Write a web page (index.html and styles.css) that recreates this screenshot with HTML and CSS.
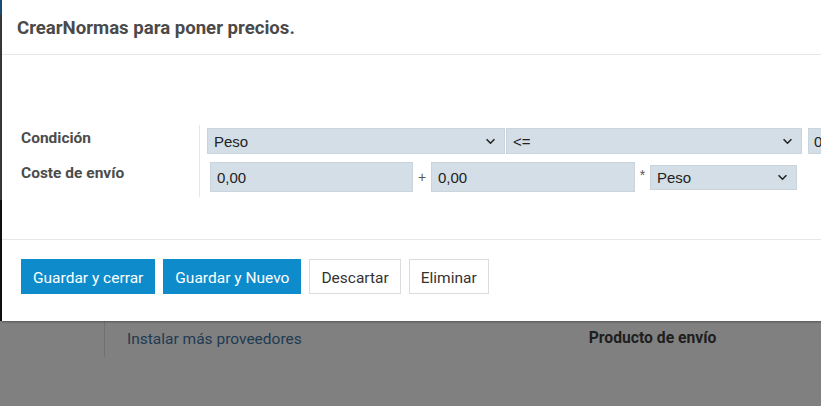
FILE: index.html
```html
<!DOCTYPE html>
<html lang="es">
<head>
    <meta charset="UTF-8">
    <title>CrearNormas para poner precios.</title>
    <link rel="stylesheet" href="styles.css">
</head>
<body>
    <div class="page">
        <div class="page-row">
            <div class="page-side"></div>
            <a class="page-link">Instalar más proveedores</a>
            <div class="page-label">Producto de envío</div>
        </div>
    </div>

    <div class="edge"></div>

    <div class="modal">
        <div class="modal-header">
            <h4>CrearNormas para poner precios.</h4>
        </div>

        <div class="modal-body">
            <div class="form-grid">
                <div class="form-label first">Condición</div>
                <div class="form-field cond">
                    <div class="select sel-var">Peso <svg viewBox="0 0 12 8"><path d="M1.5 1.5 L6 6 L10.5 1.5"/></svg></div>
                    <div class="select sel-op">&lt;= <svg viewBox="0 0 12 8"><path d="M1.5 1.5 L6 6 L10.5 1.5"/></svg></div>
                    <div class="input in-max">0</div>
                </div>

                <div class="form-label">Coste de envío</div>
                <div class="form-field cost">
                    <div class="input in-base">0,00</div>
                    <span class="op">+</span>
                    <div class="input in-factor">0,00</div>
                    <span class="op star">*</span>
                    <div class="select sel-var2">Peso <svg viewBox="0 0 12 8"><path d="M1.5 1.5 L6 6 L10.5 1.5"/></svg></div>
                </div>
            </div>
        </div>

        <div class="modal-footer">
            <button class="btn primary">Guardar y cerrar</button>
            <button class="btn primary">Guardar y Nuevo</button>
            <button class="btn">Descartar</button>
            <button class="btn">Eliminar</button>
        </div>
    </div>
</body>
</html>
```

FILE: styles.css
```css
body { margin: 0; background: #808080; font-family: Roboto, "Liberation Sans", sans-serif; overflow: hidden; width: 821px; height: 406px; position: relative; }

/* dimmed page behind the dialog */
.page { padding-top: 321px; }
.page-row { display: flex; height: 36px; }
.page-side { width: 104px; border-right: 1px solid #707070; }
.page-link { margin-left: 22px; margin-top: 9px; font-size: 15.5px; color: #1f3a50; }
.page-label { margin-left: 287px; margin-top: 7px; font-size: 15.7px; font-weight: bold; color: #1e1e1e; }

.edge { position: absolute; left: 0; top: 0; width: 2px; height: 321px; background: linear-gradient(#1a4f78 0 15px, #3a3a3a 15px 200px, #111 200px); }

/* dialog */
.modal { position: absolute; left: 2px; top: 0; width: 900px; height: 321px; background: #fff; box-shadow: 0 1px 2px rgba(0,0,0,0.35); color: #4c4c4c; }
.modal-header { height: 55px; border-bottom: 1px solid #e6e6e6; padding-left: 15px; display: flex; align-items: center; padding-top: 2px; box-sizing: border-box; }
.modal-header h4 { margin: 0; font-size: 18.6px; font-weight: bold; color: #4a4a4a; }

.modal-body { height: 185px; padding-top: 70px; box-sizing: border-box; border-bottom: 1px solid #e6e6e6; }
.form-grid { display: grid; grid-template-columns: 198px auto; grid-template-rows: 32px 40px; }
.form-label { border-right: 1px solid #e6e6e6; padding-left: 19px; font-size: 15.5px; font-weight: bold; color: #4c4c4c; padding-top: 7px; }
.form-label.first { padding-top: 4px; }
.form-field { display: flex; align-items: flex-start; font-family: "Liberation Sans", Arial, sans-serif; font-size: 15px; color: #222; }
.form-field.cond { padding-left: 7px; padding-top: 3px; }
.form-field.cost { padding-left: 10px; padding-top: 5px; }

.select, .input { background: #d3dee6; border: 1px solid #c9d4dc; box-sizing: border-box; display: flex; align-items: center; padding-left: 6px; }
.select { justify-content: space-between; padding-right: 8px; }
.select svg { width: 11px; height: 7px; fill: none; stroke: #222; stroke-width: 1.8; }
.sel-var { width: 298px; height: 26px; }
.sel-op { width: 296px; height: 26px; margin-left: 1px; }
.in-max { width: 60px; height: 26px; margin-left: 6px; padding-left: 5px; }
.in-base { width: 203px; height: 30px; }
.in-factor { width: 204px; height: 30px; }
.sel-var2 { width: 147px; height: 25px; margin-top: 3px; }
.op { width: 18px; text-align: center; line-height: 30px; color: #555; font-size: 14px; }
.op.star { width: 15px; line-height: 26px; }

.modal-footer { display: flex; gap: 8px; padding: 19px 0 0 19px; }
.btn { height: 35px; padding: 0 11px; font-family: Roboto, "Liberation Sans", sans-serif; font-size: 15.5px; border: 1px solid #dcdcdc; background: #fff; color: #333; padding-top: 2px; }
.btn.primary { background: #0d8bcb; border-color: #0d8bcb; color: #fff; }
```
